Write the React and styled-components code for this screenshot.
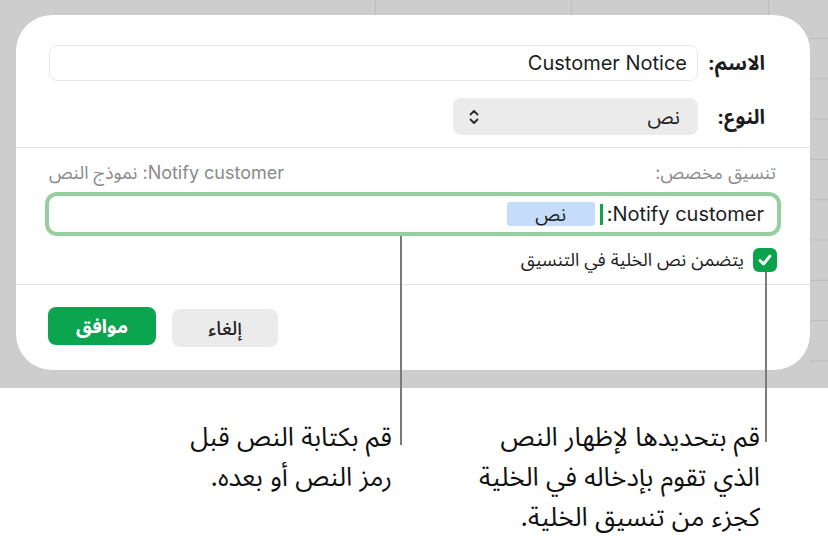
import React from 'react';
import styled, { createGlobalStyle } from 'styled-components';

const sans = `"Inter", "Noto Sans Arabic", "DejaVu Sans", sans-serif`;

const GlobalStyle = createGlobalStyle`
  html, body {
    margin: 0;
    padding: 0;
    background: #ffffff;
  }
  body {
    font-family: ${sans};
    color: #1d1d1f;
    line-height: 1.2;
  }
`;

const Page = styled.div`
  position: relative;
  width: 828px;
  height: 539px;
  overflow: hidden;
  background: #ffffff;
`;

// spreadsheet seen behind the sheet: a few column rules on top, row rules on the right
const Backdrop = styled.div`
  height: 388px;
  box-sizing: border-box;
  padding: 15px 18px 0 16px;
  background-color: #cdcdcd;
  background-image:
    linear-gradient(#bdbdbd, #bdbdbd),
    linear-gradient(#bdbdbd, #bdbdbd),
    linear-gradient(#bdbdbd, #bdbdbd),
    linear-gradient(to bottom, #bdbdbd 1px, transparent 1px);
  background-size: 1px 15px, 1px 15px, 1px 15px, 18px 40.3px;
  background-position: 375px 0, 571px 0, 768px 0, right 0 top 38px;
  background-repeat: no-repeat, no-repeat, no-repeat, repeat-y;
`;

const Dialog = styled.div`
  width: 794px;
  height: 355px;
  background: #ffffff;
  border-radius: 36px;
  display: flex;
  flex-direction: column;
  overflow: hidden;
`;

const NameSection = styled.div`
  height: 132px;
  box-sizing: border-box;
  padding: 30px 45px 0 33px;
  display: flex;
  flex-direction: column;
  gap: 17px;
`;

const Row = styled.div`
  height: ${(p) => p.$h}px;
  display: flex;
  align-items: center;
  gap: 14px;
`;

const Label = styled.div`
  width: 53px;
  font-size: 20px;
  line-height: 1;
  font-weight: 700;
  color: #1d1d1f;
`;

const TextField = styled.div`
  flex: 1;
  height: 36px;
  box-sizing: border-box;
  border: 1px solid #e8e8e8;
  border-radius: 8px;
  padding: 0 10px;
  display: flex;
  align-items: center;
  font-size: 20px;
  line-height: 1;
  color: #1d1d1f;
`;

const Popup = styled.div`
  width: 245px;
  height: 37px;
  box-sizing: border-box;
  border-radius: 8px;
  background: #ebebeb;
  padding: 0 18px 0 16px;
  display: flex;
  align-items: center;
  justify-content: space-between;
  font-size: 20px;
  line-height: 1;
`;

const Divider = styled.div`
  flex: none;
  height: 1px;
  background: #e4e4e4;
`;

const FormatSection = styled.div`
  height: 136px;
  box-sizing: border-box;
  padding: 14px 29px 0 29px;
  display: flex;
  flex-direction: column;
`;

const FormatHeader = styled.div`
  flex: none;
  display: flex;
  justify-content: space-between;
  align-items: center;
  padding: 0 5px 0 4px;
  height: 22px;
`;

const Muted = styled.span`
  font-size: 18px;
  line-height: 1;
  color: #8a8a8a;
`;

const FormatField = styled.div`
  flex: none;
  margin-top: 8px;
  height: 44px;
  box-sizing: border-box;
  border: 4px solid #95cf9f;
  border-radius: 12px;
  padding: 0 13px;
  display: flex;
  align-items: center;
  font-size: 20px;
  line-height: 1;
  color: #1d1d1f;
`;

const Caret = styled.span`
  width: 3px;
  height: 21px;
  margin: 0 4px 0 5px;
  background: #13a24a;
`;

const Token = styled.span`
  width: 88px;
  height: 24px;
  border-radius: 3px;
  background: #c6dcfb;
  display: flex;
  align-items: center;
  justify-content: center;
  font-size: 19px;
`;

const CheckRow = styled.label`
  flex: none;
  height: 24px;
  margin-top: 12px;
  padding-right: 4px;
  display: flex;
  align-items: center;
  gap: 9px;
  font-size: 18px;
  line-height: 1;
  color: #1d1d1f;
`;

const CheckBox = styled.span`
  width: 24px;
  height: 24px;
  border-radius: 6px;
  background: #0aa34b;
  display: flex;
  align-items: center;
  justify-content: center;
`;

const Footer = styled.div`
  padding: 22px 32px 0 32px;
  display: flex;
  justify-content: flex-end;
  align-items: flex-start;
  gap: 16px;
`;

const Button = styled.button`
  width: ${(p) => p.$w}px;
  height: 38px;
  margin-top: ${(p) => (p.$primary ? 0 : 2)}px;
  border: none;
  border-radius: 8px;
  background: ${(p) => (p.$primary ? '#0ba44f' : '#ebebeb')};
  color: ${(p) => (p.$primary ? '#ffffff' : '#1d1d1f')};
  font-family: ${sans};
  font-size: 19px;
  line-height: 1;
  font-weight: ${(p) => (p.$primary ? 700 : 500)};
  padding: 0;
`;

const CalloutRow = styled.div`
  display: flex;
  padding: 29px 68px 0 0;
  gap: 78px;
`;

const Callout = styled.p`
  margin: 0;
  width: ${(p) => p.$w}px;
  font-size: 26px;
  line-height: 40px;
  white-space: nowrap;
  color: #111111;
`;

const Leader = styled.div`
  position: absolute;
  width: 2px;
  background: #7b7b7b;
`;

const UpDown = () => (
  <svg width="10" height="16" viewBox="0 0 10 16" fill="none">
    <path d="M1.5 5.5 L5 2 L8.5 5.5" stroke="#2b2b2b" strokeWidth="1.8" strokeLinecap="round" strokeLinejoin="round" />
    <path d="M1.5 10.5 L5 14 L8.5 10.5" stroke="#2b2b2b" strokeWidth="1.8" strokeLinecap="round" strokeLinejoin="round" />
  </svg>
);

const Tick = () => (
  <svg width="18" height="18" viewBox="0 0 18 18" fill="none">
    <path d="M4 9.5 L7.5 13 L14 5" stroke="#ffffff" strokeWidth="2.8" strokeLinecap="round" strokeLinejoin="round" />
  </svg>
);

export default function App() {
  return (
    <Page>
      <GlobalStyle />
      <Backdrop>
        <Dialog dir="rtl">
          <NameSection>
            <Row $h={36}>
              <Label>الاسم:</Label>
              <TextField>Customer Notice</TextField>
            </Row>
            <Row $h={37}>
              <Label>النوع:</Label>
              <Popup>
                <span>نص</span>
                <UpDown />
              </Popup>
            </Row>
          </NameSection>
          <Divider />
          <FormatSection>
            <FormatHeader>
              <Muted>تنسيق مخصص:</Muted>
              <Muted>Notify customer: نموذج النص</Muted>
            </FormatHeader>
            <FormatField>
              <span>Notify customer:</span>
              <Caret />
              <Token>نص</Token>
            </FormatField>
            <CheckRow>
              <CheckBox>
                <Tick />
              </CheckBox>
              <span>يتضمن نص الخلية في التنسيق</span>
            </CheckRow>
          </FormatSection>
          <Divider />
          <Footer>
            <Button $w={106}>إلغاء</Button>
            <Button $primary $w={108}>موافق</Button>
          </Footer>
        </Dialog>
      </Backdrop>
      <CalloutRow dir="rtl">
        <Callout $w={290}>
          قم بتحديدها لإظهار النص
          <br />
          الذي تقوم بإدخاله في الخلية
          <br />
          كجزء من تنسيق الخلية.
        </Callout>
        <Callout $w={210}>
          قم بكتابة النص قبل
          <br />
          رمز النص أو بعده.
        </Callout>
      </CalloutRow>
      <Leader style={{ left: 765, top: 272, height: 170 }} />
      <Leader style={{ left: 400, top: 236, height: 209 }} />
    </Page>
  );
}
